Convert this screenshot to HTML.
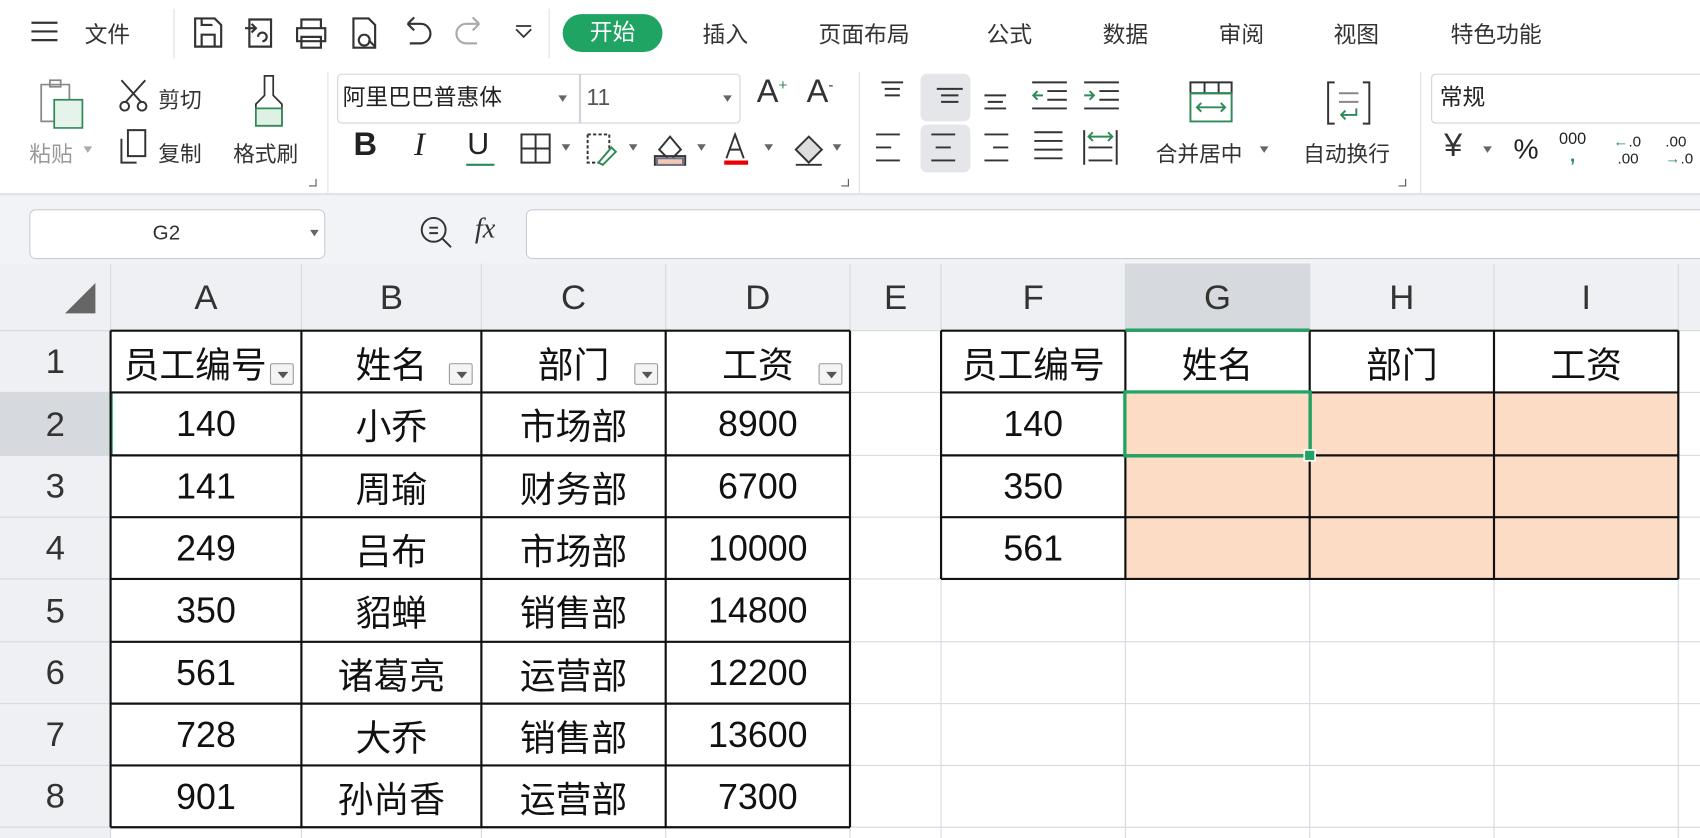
<!DOCTYPE html>
<html><head><meta charset="utf-8">
<style>
*{margin:0;padding:0;box-sizing:border-box}
html,body{width:1700px;height:838px;overflow:hidden;background:#fff}
#w{position:absolute;left:0;top:0;width:1568px;height:773px;transform:scale(1.08418);transform-origin:0 0;font-family:"Liberation Sans","Noto Sans CJK SC",sans-serif;color:#222}
.a{position:absolute}
.t{position:absolute;font-size:21px;color:#333;top:16px}
.ic{position:absolute}
.sep{position:absolute;background:#dde0e5;width:1px}
.lbl{position:absolute;font-size:20px;color:#333}
.cell{position:absolute;display:flex;align-items:center;justify-content:center;font-size:33px;color:#111}
.hd{position:absolute;display:flex;align-items:center;justify-content:center;font-size:32px;color:#333;background:#f0f2f5}
.fb{position:absolute;width:22px;height:20px;border:1px solid #999;background:#f4f4f4;border-radius:2px}
.fb:after{content:"";position:absolute;left:6px;top:7px;border-left:5px solid transparent;border-right:5px solid transparent;border-top:6px solid #555}
.dd{position:absolute;width:0;height:0;border-left:4px solid transparent;border-right:4px solid transparent;border-top:6px solid #666}
</style></head><body><div id="w">
<!-- top tab bar -->
<svg class="ic" style="left:28px;top:18px" width="26" height="22"><path d="M1 3H25M1 11H25M1 19H25" stroke="#333" stroke-width="2"/></svg>
<div class="t" style="left:78px">文件</div>
<div class="sep" style="left:160px;top:8px;height:46px"></div>
<svg class="ic" style="left:178px;top:14px" width="320" height="32" fill="none" stroke="#333" stroke-width="2">
<path d="M2 3H20L26 9V29H2Z M8 29V18H20V29 M8 3V9H18"/>
<path d="M52 4H72V29H52Z M48 12H58 M54 8L58 12L54 16 M60 20a4 4 0 1 1 4 4"/>
<path d="M100 12V4H118V12 M96 12H122V24H96Z M100 20H118V30H100Z"/>
<path d="M148 3H162L168 9V30H148Z M158 18a5 5 0 1 1 -0.1 0 M162 23L168 29"/>
<path d="M198 8H210a9 9 0 0 1 0 18H200 M198 8L204 2 M198 8L204 14"/>
<path d="M264 8H252a9 9 0 0 0 0 18H262 M264 8L258 2 M264 8L258 14" stroke="#aaa"/>
<path d="M298 13L305 20L312 13 M298 10H312" stroke-width="1.6"/>
</svg>
<div class="sep" style="left:506px;top:8px;height:46px"></div>
<div class="a" style="left:519px;top:13px;width:92px;height:35px;border-radius:18px;background:#1fa463;color:#fff;font-size:21px;text-align:center;line-height:35px">开始</div>
<div class="t" style="left:648px">插入</div>
<div class="t" style="left:755px">页面布局</div>
<div class="t" style="left:910px">公式</div>
<div class="t" style="left:1017px">数据</div>
<div class="t" style="left:1124px">审阅</div>
<div class="t" style="left:1230px">视图</div>
<div class="t" style="left:1338px">特色功能</div>

<!-- ribbon -->
<svg class="ic" style="left:34px;top:72px" width="48" height="48" fill="none" stroke-width="1.6"><path d="M4 6H30V40H4Z M12 2H22V8H12Z" stroke="#888"/><path d="M16 20H42V46H16Z" stroke="#2e8b57" fill="#e6f3ea"/></svg>
<div class="lbl" style="left:27px;top:126px;color:#999">粘贴</div><div class="dd" style="left:77px;top:135px;border-top-color:#aaa"></div>
<svg class="ic" style="left:108px;top:72px" width="32" height="32" fill="none" stroke="#333" stroke-width="1.8"><path d="M4 2L22 22 M26 2L8 22"/><circle cx="7" cy="26" r="4"/><circle cx="23" cy="26" r="4"/></svg>
<div class="lbl" style="left:146px;top:76px">剪切</div>
<svg class="ic" style="left:108px;top:118px" width="30" height="36" fill="none" stroke="#333" stroke-width="1.8"><path d="M10 2H26V26H10Z M4 10V32H18"/></svg>
<div class="lbl" style="left:146px;top:126px">复制</div>
<svg class="ic" style="left:228px;top:68px" width="40" height="52" fill="none" stroke="#333" stroke-width="1.6"><path d="M16 2H24V20L32 28V48H8V28L16 20Z"/><path d="M8 32H32V48H8Z" fill="#dff0e4" stroke="#2e8b57"/></svg>
<div class="lbl" style="left:215px;top:126px">格式刷</div>
<div class="sep" style="left:302px;top:66px;height:112px"></div>
<div class="a" style="left:311px;top:68px;width:224px;height:46px;border:1px solid #cfd3da;border-radius:4px 0 0 4px;font-size:21px;line-height:44px;padding-left:4px">阿里巴巴普惠体</div><div class="dd" style="left:515px;top:88px"></div>
<div class="a" style="left:535px;top:68px;width:148px;height:46px;border:1px solid #cfd3da;border-radius:0 4px 4px 0;font-size:21px;line-height:44px;padding-left:5px;color:#555">11</div><div class="dd" style="left:667px;top:88px"></div>
<div class="a" style="left:698px;top:68px;font-size:30px;color:#333">A<sup style="font-size:14px;color:#2e8b57">+</sup></div>
<div class="a" style="left:744px;top:68px;font-size:30px;color:#333">A<sup style="font-size:14px">-</sup></div>
<div class="a" style="left:326px;top:117px;font-size:30px;font-weight:bold">B</div>
<div class="a" style="left:382px;top:117px;font-size:30px;font-style:italic;font-family:'Liberation Serif',serif">I</div>
<div class="a" style="left:431px;top:117px;font-size:28px">U</div><div class="a" style="left:430px;top:151px;width:26px;height:2px;background:#2e8b57"></div>
<svg class="ic" style="left:480px;top:122px" width="300" height="34" fill="none" stroke="#333" stroke-width="1.8">
<path d="M1 2H27V28H1Z M14 2V28 M1 15H27"/>
<path d="M62 2H82V16 M62 2V28H72" stroke-dasharray="3 2"/><path d="M72 28L84 14L88 18L76 30Z" stroke="#2e8b57"/>
<path d="M128 16L138 4L148 16L138 26Z M124 22H152V30H124Z" /><path d="M126 24H150V30H126Z" fill="#f5c9b3" stroke="#6a6f8a"/>
<path d="M190 24L198 2L206 24 M193 16H203"/><path d="M188 28H210" stroke="#e00" stroke-width="4"/>
<path d="M254 16L266 4L278 16L266 28Z M254 16L266 28" fill="#ddd"/><path d="M254 30H278"/>
</svg>
<div class="dd" style="left:518px;top:133px"></div><div class="dd" style="left:580px;top:133px"></div><div class="dd" style="left:643px;top:133px"></div><div class="dd" style="left:705px;top:133px"></div><div class="dd" style="left:768px;top:133px"></div>
<div class="sep" style="left:792px;top:66px;height:112px"></div>
<div class="a" style="left:849px;top:68px;width:46px;height:44px;background:#e4e6ea;border-radius:6px"></div>
<div class="a" style="left:849px;top:115px;width:46px;height:44px;background:#e4e6ea;border-radius:6px"></div>
<svg class="ic" style="left:806px;top:72px" width="232" height="86" fill="none" stroke="#333" stroke-width="1.8">
<path d="M7 4H27 M10 10H24 M10 16H24"/>
<path d="M58 14H82 M62 20H78 M62 26H78" transform="translate(0,-4)"/>
<path d="M102 20H122 M105 26H119 M102 32H122" transform="translate(0,-4)"/>
<path d="M146 4H178 M160 12H178 M160 20H178 M146 28H178"/><path d="M156 16H147 M151 12L147 16L151 20" stroke="#2e8b57"/>
<path d="M194 4H226 M208 12H226 M208 20H226 M194 28H226"/><path d="M194 16H203 M199 12L203 16L199 20" stroke="#2e8b57"/>
<path d="M2 52H24 M2 64H16 M2 76H24"/>
<path d="M53 52H75 M57 64H71 M53 76H75"/>
<path d="M102 52H124 M110 64H124 M102 76H124"/>
<path d="M148 50H174 M148 58H174 M148 66H174 M148 74H174"/>
<path d="M194 48V80 M224 48V80 M198 64H220 M198 76H220"/><path d="M198 54H220 M202 50L198 54L202 58 M216 50L220 54L216 58" stroke="#2e8b57"/>
</svg>
<svg class="ic" style="left:1096px;top:74px" width="44" height="42" fill="none" stroke-width="1.8"><path d="M2 2H40V12H2Z M15 2V12 M28 2V12" stroke="#333"/><path d="M2 12H40V38H2Z M8 25H34 M12 21L8 25L12 29 M30 21L34 25L30 29" stroke="#2e8b57"/></svg>
<div class="lbl" style="left:1066px;top:126px">合并居中</div><div class="dd" style="left:1162px;top:135px"></div>
<svg class="ic" style="left:1223px;top:74px" width="44" height="42" fill="none" stroke-width="1.8"><path d="M8 2H2V40H8 M34 2H40V40H34" stroke="#333"/><path d="M12 12H30 M12 20H30" stroke="#888"/><path d="M28 26V32H14 M18 28L14 32L18 36" stroke="#2e8b57"/></svg>
<div class="lbl" style="left:1202px;top:126px">自动换行</div>
<div class="a" style="left:1290px;top:165px;width:7px;height:7px;border-right:1px solid #555;border-bottom:1px solid #555"></div>
<div class="a" style="left:776px;top:165px;width:7px;height:7px;border-right:1px solid #555;border-bottom:1px solid #555"></div>
<div class="a" style="left:285px;top:165px;width:7px;height:7px;border-right:1px solid #555;border-bottom:1px solid #555"></div>
<div class="sep" style="left:1310px;top:66px;height:112px"></div>
<div class="a" style="left:1320px;top:68px;width:260px;height:46px;border:1px solid #cfd3da;border-radius:4px;font-size:21px;line-height:44px;padding-left:7px">常规</div>
<div class="a" style="left:1332px;top:118px;font-size:30px;color:#333">¥</div><div class="dd" style="left:1368px;top:135px"></div>
<div class="a" style="left:1396px;top:122px;font-size:26px">%</div>
<div class="a" style="left:1438px;top:122px;font-size:15px;line-height:14px;text-align:center">000<br><b style="color:#2e8b57;font-size:18px">,</b></div>
<div class="a" style="left:1488px;top:122px;font-size:14px;line-height:16px"><span style="color:#2e8b57">←</span>.0<br>&nbsp;.00</div>
<div class="a" style="left:1536px;top:122px;font-size:14px;line-height:16px">.00<br><span style="color:#2e8b57">→</span>.0</div>

<!-- formula bar -->
<div class="a" style="left:0;top:178px;width:1568px;height:65px;background:#f1f3f6;border-top:2px solid #e0e3e8"></div>
<div class="a" style="left:27px;top:193px;width:273px;height:46px;background:#fff;border:1.5px solid #c8ccd2;border-radius:6px;font-size:19px;line-height:44px;text-align:center;color:#333;padding-right:20px">G2</div><div class="dd" style="left:286px;top:212px"></div>
<svg class="ic" style="left:386px;top:198px" width="34" height="34" fill="none" stroke="#333" stroke-width="1.8"><circle cx="14" cy="14" r="11"/><path d="M10 12H18M10 17H18M22 22L30 30"/></svg>
<div class="a" style="left:438px;top:196px;font-size:26px;font-style:italic;font-family:'Liberation Serif',serif;color:#333">fx</div>
<div class="a" style="left:485px;top:193px;width:1100px;height:46px;background:#fff;border:1.5px solid #c8ccd2;border-radius:6px"></div>

<!-- grid -->
<div class="a" style="left:0;top:243px;width:1568px;height:530px;background:#fff"></div>
<svg class="a" style="left:0;top:243px" width="1568" height="530">
<rect x="0" y="0" width="1568" height="62" fill="#eef0f3"/>
<rect x="0" y="0" width="102" height="530" fill="#eef0f3"/>
<rect x="1038" y="0" width="170" height="62" fill="#d6d9de"/>
<rect x="0" y="119" width="102" height="58" fill="#d6d9de"/>
<rect x="1038" y="119" width="510" height="172" fill="#fddcc6"/>
<g stroke="#d5d9e0" stroke-width="1">
<path d="M102 0V530 M278 0V530 M444 0V530 M614 0V530 M784 0V530 M868 0V530 M1038 0V530 M1208 0V530 M1378 0V530 M1548 0V530"/>
<path d="M0 62H1568 M0 119H1568 M0 177H1568 M0 234H1568 M0 291H1568 M0 349H1568 M0 406H1568 M0 463H1568 M0 520H1568"/>
</g>
<path d="M88 18V46H60Z" fill="#666"/>
<rect x="101" y="119" width="3" height="58" fill="#1fa463"/>
<g stroke="#111" stroke-width="2" fill="none">
<path d="M102 62H784 M102 119H784 M102 177H784 M102 234H784 M102 291H784 M102 349H784 M102 406H784 M102 463H784 M102 520H784"/>
<path d="M102 62V520 M278 62V520 M444 62V520 M614 62V520 M784 62V520"/>
<path d="M868 62H1548 M868 119H1548 M868 177H1548 M868 234H1548 M868 291H1548"/>
<path d="M868 62V291 M1038 62V291 M1208 62V291 M1378 62V291 M1548 62V291"/>
</g>
<rect x="1038" y="60" width="170" height="3" fill="#1fa463"/>
<rect x="1037.5" y="118.5" width="171" height="59" fill="none" stroke="#1fa463" stroke-width="3"/>
<rect x="1203" y="172" width="10" height="10" fill="#1fa463" stroke="#fff" stroke-width="1.5"/>
</svg>
<div class="hd" style="left:102px;top:243px;width:176px;height:62px;background:none">A</div>
<div class="hd" style="left:278px;top:243px;width:166px;height:62px;background:none">B</div>
<div class="hd" style="left:444px;top:243px;width:170px;height:62px;background:none">C</div>
<div class="hd" style="left:614px;top:243px;width:170px;height:62px;background:none">D</div>
<div class="hd" style="left:784px;top:243px;width:84px;height:62px;background:none">E</div>
<div class="hd" style="left:868px;top:243px;width:170px;height:62px;background:none">F</div>
<div class="hd" style="left:1038px;top:243px;width:170px;height:62px;background:none">G</div>
<div class="hd" style="left:1208px;top:243px;width:170px;height:62px;background:none">H</div>
<div class="hd" style="left:1378px;top:243px;width:170px;height:62px;background:none">I</div>
<div class="hd" style="left:0;top:305px;width:102px;height:57px;background:none">1</div>
<div class="hd" style="left:0;top:362px;width:102px;height:58px;background:none">2</div>
<div class="hd" style="left:0;top:420px;width:102px;height:57px;background:none">3</div>
<div class="hd" style="left:0;top:477px;width:102px;height:57px;background:none">4</div>
<div class="hd" style="left:0;top:534px;width:102px;height:58px;background:none">5</div>
<div class="hd" style="left:0;top:592px;width:102px;height:57px;background:none">6</div>
<div class="hd" style="left:0;top:649px;width:102px;height:57px;background:none">7</div>
<div class="hd" style="left:0;top:706px;width:102px;height:57px;background:none">8</div>

<!-- row1 -->
<div class="cell" style="left:102px;top:305px;width:176px;height:57px;justify-content:flex-start;padding-left:12px;overflow:hidden;white-space:nowrap">员工编号</div>
<div class="cell" style="left:278px;top:305px;width:166px;height:57px">姓名</div>
<div class="cell" style="left:444px;top:305px;width:170px;height:57px">部门</div>
<div class="cell" style="left:614px;top:305px;width:170px;height:57px">工资</div>
<div class="fb" style="left:249px;top:335px"></div><div class="fb" style="left:414px;top:335px"></div><div class="fb" style="left:585px;top:335px"></div><div class="fb" style="left:755px;top:335px"></div>
<div class="cell" style="left:868px;top:305px;width:170px;height:57px">员工编号</div>
<div class="cell" style="left:1038px;top:305px;width:170px;height:57px">姓名</div>
<div class="cell" style="left:1208px;top:305px;width:170px;height:57px">部门</div>
<div class="cell" style="left:1378px;top:305px;width:170px;height:57px">工资</div>

<div class="cell" style="left:102px;top:362px;width:176px;height:58px">140</div><div class="cell" style="left:278px;top:362px;width:166px;height:58px">小乔</div><div class="cell" style="left:444px;top:362px;width:170px;height:58px">市场部</div><div class="cell" style="left:614px;top:362px;width:170px;height:58px">8900</div>
<div class="cell" style="left:102px;top:420px;width:176px;height:57px">141</div><div class="cell" style="left:278px;top:420px;width:166px;height:57px">周瑜</div><div class="cell" style="left:444px;top:420px;width:170px;height:57px">财务部</div><div class="cell" style="left:614px;top:420px;width:170px;height:57px">6700</div>
<div class="cell" style="left:102px;top:477px;width:176px;height:57px">249</div><div class="cell" style="left:278px;top:477px;width:166px;height:57px">吕布</div><div class="cell" style="left:444px;top:477px;width:170px;height:57px">市场部</div><div class="cell" style="left:614px;top:477px;width:170px;height:57px">10000</div>
<div class="cell" style="left:102px;top:534px;width:176px;height:58px">350</div><div class="cell" style="left:278px;top:534px;width:166px;height:58px">貂蝉</div><div class="cell" style="left:444px;top:534px;width:170px;height:58px">销售部</div><div class="cell" style="left:614px;top:534px;width:170px;height:58px">14800</div>
<div class="cell" style="left:102px;top:592px;width:176px;height:57px">561</div><div class="cell" style="left:278px;top:592px;width:166px;height:57px">诸葛亮</div><div class="cell" style="left:444px;top:592px;width:170px;height:57px">运营部</div><div class="cell" style="left:614px;top:592px;width:170px;height:57px">12200</div>
<div class="cell" style="left:102px;top:649px;width:176px;height:57px">728</div><div class="cell" style="left:278px;top:649px;width:166px;height:57px">大乔</div><div class="cell" style="left:444px;top:649px;width:170px;height:57px">销售部</div><div class="cell" style="left:614px;top:649px;width:170px;height:57px">13600</div>
<div class="cell" style="left:102px;top:706px;width:176px;height:57px">901</div><div class="cell" style="left:278px;top:706px;width:166px;height:57px">孙尚香</div><div class="cell" style="left:444px;top:706px;width:170px;height:57px">运营部</div><div class="cell" style="left:614px;top:706px;width:170px;height:57px">7300</div>

<div class="cell" style="left:868px;top:362px;width:170px;height:58px">140</div>
<div class="cell" style="left:868px;top:420px;width:170px;height:57px">350</div>
<div class="cell" style="left:868px;top:477px;width:170px;height:57px">561</div>
</div></body></html>
